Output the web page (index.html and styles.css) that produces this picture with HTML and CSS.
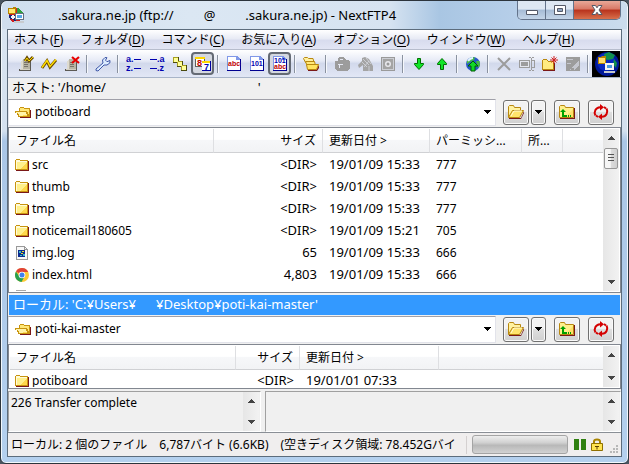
FILE: index.html
```html
<!DOCTYPE html>
<html lang="ja">
<head>
  <meta charset="UTF-8">
  <meta name="viewport" content="width=device-width, initial-scale=1.0">
  <title>NextFTP4</title>
  <link rel="stylesheet" href="styles.css">
</head>
<body>
  <!-- shared icons -->
  <svg class="defs" aria-hidden="true">
    <symbol id="folder" viewBox="0 0 14 14">
      <path d="M13 3h1v10H1v-1h12z" fill="#7a1818"/>
      <path d="M0 2h1V1h4v1h8v10H0z" fill="#c89410"/>
      <path d="M1 2h4v1h7v8H1z" fill="#fff08c"/>
      <path d="M5 11l7-7v7z" fill="#ffd84c"/>
      <path d="M1 2h4v1h7v1H2v7H1z" fill="#fffbd8"/>
    </symbol>
    <symbol id="folder-open" viewBox="0 0 16 13">
      <path d="M15 4h1v8H5v-1h10z" fill="#7a1818"/>
      <path d="M4 2h1V1h4v1h6v9H4z" fill="#c89410"/>
      <path d="M5 2h4v1h5v7H5z" fill="#ffe878"/>
      <path d="M0 5h12v1h1v2h1v3H3V9H2V7H0z" fill="#c89410"/>
      <path d="M1 6h10v2h1v2H4V8H3V7H1z" fill="#fff4a8"/>
      <path d="M8 9h4v1H7z" fill="#ffdc58"/>
    </symbol>
    <symbol id="folder-tool" viewBox="0 0 18 16">
      <path d="M2 14h12l3-7v2l-3 6H2z" fill="#7a1818"/>
      <path d="M1.500 13.500v-11l1-1h4l1 2h6v3" fill="#fff2a0" stroke="#b88810"/>
      <path d="M1.500 13.500l4-7h11l-4 7z" fill="#ffe46c" stroke="#b88810"/>
      <path d="M4 12l3-5h8" fill="none" stroke="#fffbd8"/>
    </symbol>
    <symbol id="folder-up" viewBox="0 0 18 16">
      <path d="M2 14h14V4h1v11H2z" fill="#7a1818"/>
      <path d="M1.500 13.500v-11l1-1h4l1 2h8v10z" fill="#fff08a" stroke="#b88810"/>
      <path d="M8 13l7-8v8z" fill="#ffdf68"/>
      <path d="M5 5l3 3H6v3h3v2H4V8H2z" fill="#00a000"/>
      <path d="M10 11h1v2h-1zM12 11h1v2h-1z" fill="#00a000"/>
    </symbol>
    <symbol id="reload" viewBox="0 0 16 16">
      <path d="M2.500 11.500A5.500 5.500 0 0 1 7 3.200M13.500 4.500A5.500 5.500 0 0 1 9 12.800" fill="none" stroke="#d40000" stroke-width="2"/>
      <path d="M7 0l4 3.200-4 3.300zM9 9.500l-4 3.300L9 16z" fill="#d40000"/>
      <path d="M11 3l2 1.500M5 13l-2-1.500" stroke="#d40000" stroke-width="2"/>
    </symbol>
    <symbol id="drop" viewBox="0 0 7 4"><path d="M0 0h7L3.500 4z" fill="#000"/></symbol>
    <symbol id="up" viewBox="0 0 7 4"><path d="M0 4h7L3.500 0z" fill="#444"/></symbol>
    <symbol id="page" viewBox="0 0 14 15">
      <path d="M0 0h10l4 4v11H0z" fill="#000090"/>
      <path d="M0 0h10l3 3v11H0z" fill="#8098e8"/>
      <path d="M1 1h8v3h4v10H1z" fill="#fff"/>
    </symbol>
    <symbol id="arrow" viewBox="0 0 12 14">
      <path d="M4.500 1.500h3v5h3v1L6 12.500 1.500 7.500v-1h3z" fill="#10e428" stroke="#007000"/>
    </symbol>
    <symbol id="server" viewBox="0 0 16 16">
      <path d="M3 5l2-2h7v10H3z" fill="#b8b4a4"/>
      <path d="M3 5l2-2v10H3z" fill="#dedbd0"/>
      <path d="M6 6h4v1H6zM6 8h4v1H6zM6 10h4v1H6z" fill="#77736a"/>
      <path d="M12 4h1v9h-1zM1 13h12v2H1z" fill="#5c5a54"/>
      <path d="M2 13h10v1H2z" fill="#d4d0c4"/>
    </symbol>
  </svg>

  <div class="window">
    <header class="titlebar">
      <svg class="app-icon" viewBox="0 0 16 16">
        <circle cx="8" cy="8" r="7" fill="#d42020"/>
        <path d="M1 8a7 7 0 0 0 7 7V8z" fill="#182878"/>
        <path d="M9 1a7 7 0 0 1 6 7H9z" fill="#30a040"/>
        <path d="M2 10l3-2 2 2-2 3z" fill="#f4f4f4"/>
        <path d="M1 12h4l2 3H5z" fill="#d42020"/>
        <path d="M0 1h4l1-1h3v7H0z" fill="#b88400"/>
        <path d="M1 2h6v4H1z" fill="#ffe870"/>
        <path d="M7.500 6.500h8v6h-8z" fill="#fff" stroke="#667080"/>
        <path d="M9 8h5v3H9z" fill="#58a8e8"/>
        <path d="M6 14h10v2H6z" fill="#c8ccd0"/>
      </svg>
      <h1><span>.sakura.ne.jp (ftp://</span><span class="at">@</span><span>.sakura.ne.jp) - NextFTP4</span></h1>
      <div class="win-buttons">
        <button class="min" aria-label="最小化"><svg viewBox="0 0 14 12"><path d="M1.500 6.500h11v4h-11z" fill="#fff" stroke="#555a68"/></svg></button>
        <button class="max" aria-label="最大化"><svg viewBox="0 0 14 12"><path d="M1.500 1.500h11v9h-11z" fill="#fff" stroke="#555a68"/><path d="M4.500 4.500h5v3h-5z" fill="#93a8c4" stroke="#555a68"/></svg></button>
        <button class="close" aria-label="閉じる"><svg viewBox="0 0 14 12"><path d="M2 1.500h3.500L7 3.800l1.500-2.300H12L9 6l3 4.500H8.500L7 8.200l-1.500 2.300H2L5 6z" fill="#fff" stroke="#555a68"/></svg></button>
      </div>
    </header>

    <main class="client">
      <nav class="menu">
        <button>ホスト(<u>F</u>)</button>
        <button>フォルダ(<u>D</u>)</button>
        <button>コマンド(<u>C</u>)</button>
        <button>お気に入り(<u>A</u>)</button>
        <button>オプション(<u>O</u>)</button>
        <button>ウィンドウ(<u>W</u>)</button>
        <button>ヘルプ(<u>H</u>)</button>
      </nav>

      <div class="toolbar">
        <button aria-label="接続"><svg viewBox="0 0 16 16"><use href="#server"/><path class="aa" d="M7 5l2-3 2 3 4-4" fill="none" stroke="#6a4a00" stroke-width="3"/><path class="aa" d="M7 5l2-3 2 3 4-4" fill="none" stroke="#ffe000"/></svg></button>
        <button aria-label="クイック接続"><svg class="aa" viewBox="0 0 16 16"><path d="M1 12l5-7 3 6 6-7" fill="none" stroke="#6a4a00" stroke-width="3"/><path d="M1 11.500l5-7 3 6 6-7" fill="none" stroke="#ffdc00" stroke-width="1.500"/></svg></button>
        <button aria-label="切断"><svg viewBox="0 0 16 16"><use href="#server"/><path class="aa" d="M8 1l7 6M15 1L8 7" stroke="#e80000" stroke-width="2.200"/></svg></button>
        <i></i>
        <button aria-label="設定"><svg class="aa" viewBox="0 0 16 16"><path d="M1 13l7-6-.5-3L10 1.500l2 .2-1.500 2.500 1.500 1.500L15 4.500l-.2 2.500L12 9l-3 0-6 6-2-.5z" fill="#dcecff" stroke="#4058a8"/></svg></button>
        <i></i>
        <button aria-label="昇順"><svg viewBox="0 0 16 16"><text x="0" y="6">a.</text><text x="0" y="15">z.</text><path d="M8 3h7v1H8zM8 12h7v1H8z" fill="#0000b0"/></svg></button>
        <button aria-label="降順"><svg viewBox="0 0 16 16"><text x="8" y="6">.a</text><text x="8" y="15">.z</text><path d="M1 3h7v1H1zM1 12h7v1H1z" fill="#0000b0"/></svg></button>
        <button aria-label="種類順"><svg viewBox="0 0 16 16"><path d="M1 1h6v6H1zM5 5h6v6H5zM9 9h6v6H9z" fill="#4a4a10"/><path d="M1 1h5v5H1zM5 5h5v5H5zM9 9h5v5H9z" fill="#a8a020"/><path d="M2 2h4v4H2zM6 6h4v4H6zM10 10h4v4h-4z" fill="#ffff98"/></svg></button>
        <button class="pressed" aria-label="日付順"><svg viewBox="0 0 16 16"><path d="M0 1h10v10H0z" fill="#606060"/><path d="M1 2h8v8H1z" fill="#fff"/><path d="M0 1h10v2H0z" fill="#ffd800"/><text class="red" x="2" y="10">8</text><path d="M7 5h9v10H7z" fill="#0000a0"/><path d="M7 5h8v9H7z" fill="#fff"/><path d="M7 5h8v2H7z" fill="#ffd800"/><text x="9" y="14">7</text></svg></button>
        <i></i>
        <button aria-label="アスキー"><svg viewBox="0 0 16 16"><use href="#page" x="1" width="14" height="15"/><text class="red small" x="2" y="10">abc</text></svg></button>
        <button aria-label="バイナリ"><svg viewBox="0 0 16 16"><use href="#page" x="1" width="14" height="15"/><text class="small" x="2" y="10">101</text></svg></button>
        <button class="pressed" aria-label="自動"><svg viewBox="0 0 16 16"><use href="#page" x="1" width="14" height="15"/><text class="small" x="2" y="7">101</text><text class="red small" x="2" y="13">abc</text></svg></button>
        <i></i>
        <button aria-label="フォルダを開く"><svg class="aa" viewBox="0 0 16 16"><path d="M5 13.500h8.500L16 9v3l-2 3H5z" fill="#7a1818"/><path d="M.5 2.500l1-1h3l1 1h4.500l1 4H2.500z" fill="#fff0a0" stroke="#b88810"/><path d="M2.500 5.500h9l1 4H4z" fill="#ffe878" stroke="#b88810"/><path d="M3.500 8.500h12l-2 5h-9z" fill="#ffe460" stroke="#b88810"/></svg></button>
        <i></i>
        <button disabled aria-label="アップロード"><svg viewBox="0 0 16 16"><path d="M1 5h3V2l2-1h4l2 3h2l2 2v6l-3 3H3l-2-2z" fill="#9c9c9c"/><path d="M6 3h3v1H6zM4 8h5v1H6v3H5V9H4z" fill="#e4e7f2"/></svg></button>
        <button disabled aria-label="検索"><svg class="aa" viewBox="0 0 16 16"><path d="M5 2l3-1 4 2 4 7v5H6V9l-4 3-1-3 4-4z" fill="#a4a4a4"/><path d="M6 3l6 6M9 2l5 6M5 6l5 5M7 11l5-6M12 10v5" stroke="#dcdfe8" stroke-width=".7"/></svg></button>
        <button disabled aria-label="表示"><svg viewBox="0 0 16 16"><path d="M1.500 1.500h13v13h-13z" fill="#ccced4" stroke="#9a9a9a"/><path d="M3 3h10v10H3z" fill="#a4a4a4"/><circle class="aa" cx="8" cy="8" r="3" fill="#e8e8ec"/><circle class="aa" cx="8" cy="8" r="1.500" fill="#999"/></svg></button>
        <i></i>
        <button aria-label="ダウンロード"><svg class="aa" viewBox="0 0 16 16"><use href="#arrow" x="2" y="1" width="12" height="14"/></svg></button>
        <button aria-label="送信"><svg class="aa" viewBox="0 0 16 16"><use href="#arrow" x="2" y="1" width="12" height="14" transform="rotate(180 8 8)"/></svg></button>
        <i></i>
        <button aria-label="ミラー"><svg class="aa" viewBox="0 0 16 16"><circle cx="8" cy="8" r="7" fill="#2858c8"/><path d="M2 5q4-5 8-3.500L9 4 5 6 2 8zM11 5l3.500 0 .5 4-2 3z" fill="#48b848"/><path d="M3 5q2-3 5-3" stroke="#e4f4ff" stroke-width="2" fill="none"/><path d="M8 5l5 5h-3v5H6v-5H3z" fill="#10d828" stroke="#006000"/></svg></button>
        <i></i>
        <button disabled aria-label="削除"><svg class="aa" viewBox="0 0 16 16"><path d="M2 2l12 12M14 2L2 14" stroke="#9c9c9c" stroke-width="2"/></svg></button>
        <button disabled aria-label="名前の変更"><svg viewBox="0 0 16 16"><path d="M.5 4.500h10v7H.5z" fill="#e4e6ee" stroke="#9c9c9c"/><path d="M2 6h7v4H2z" fill="#9c9c9c"/><path d="M10 1h2v1h-2zM13 1h2v1h-2zM12 2h1v12h-1zM10 14h2v1h-2zM13 14h2v1h-2zM13 4h3v8h-3v-1h2V5h-2z" fill="#9c9c9c"/></svg></button>
        <button aria-label="フォルダ作成"><svg viewBox="0 0 16 16"><path d="M1 14h11V7h1v8H1z" fill="#7a1818"/><path d="M0 4l1-1h4l1 2h6v9H0z" fill="#b88810"/><path d="M1 4h4l1 2h5v7H1z" fill="#ffec80"/><path class="aa" d="M12 0v8M8 4h8M9.500 1.500l5 5M14.500 1.500l-5 5" stroke="#d02020"/></svg></button>
        <button disabled aria-label="属性"><svg viewBox="0 0 16 16"><path d="M1 1h14v14H1z" fill="#9c9c9c"/><path d="M2 3h6v1H2zM2 7h4v1H2zM4 14l10-9v4l-4 5z" fill="#c4c6ce"/><path d="M6 12h3v2H6z" fill="#9c9c9c"/></svg></button>
        <i></i>
        <svg class="globe" viewBox="0 0 28 26">
          <path d="M0 0h28v26H0z" fill="#000"/>
          <circle cx="15" cy="13" r="12" fill="#001898"/>
          <circle cx="14" cy="11" r="9" fill="#0828c0"/>
          <path d="M12 3l5-2 6 3-2 4-5 1-3-1zM22 8l3 4-1 5-3-4z" fill="#10904c"/>
          <path d="M6 6h3l1-1h4v8H6z" fill="#b88400"/>
          <path d="M7 7h6v5H7z" fill="#ffe070"/>
          <path d="M13 12h9v7h-9z" fill="#f4f4f4"/>
          <path d="M15 14h5v3h-5z" fill="#4898e0"/>
          <path d="M12 20h11v2H12z" fill="#c4c8cc"/>
        </svg>
      </div>

      <div class="pathline host">ホスト: '/home/<span class="blank"></span>'</div>
      <div class="location">
        <label class="combo">
          <svg><use href="#folder-open"/></svg>
          <select aria-label="ホストのフォルダ"><option>potiboard</option></select>
          <svg class="drop"><use href="#drop"/></svg>
        </label>
        <button class="tool" aria-label="開く"><svg class="aa"><use href="#folder-tool"/></svg></button><button class="tool split" aria-label="履歴"><svg class="drop"><use href="#drop"/></svg></button>
        <button class="tool" aria-label="上へ"><svg class="aa"><use href="#folder-up"/></svg></button>
        <button class="tool" aria-label="更新"><svg class="aa"><use href="#reload"/></svg></button>
      </div>

      <section class="list remote">
        <div class="rows">
          <table>
            <colgroup><col class="w-name"><col class="w-size"><col class="w-date"><col class="w-perm"><col class="w-owner"><col></colgroup>
            <thead>
              <tr><th>ファイル名</th><th class="num">サイズ</th><th>更新日付 &gt;</th><th>パーミッシ...</th><th>所...</th><th></th></tr>
            </thead>
            <tbody>
              <tr><td><svg><use href="#folder"/></svg>src</td><td class="num">&lt;DIR&gt;</td><td class="date">19/01/09 15:33</td><td>777</td><td></td><td></td></tr>
              <tr><td><svg><use href="#folder"/></svg>thumb</td><td class="num">&lt;DIR&gt;</td><td class="date">19/01/09 15:33</td><td>777</td><td></td><td></td></tr>
              <tr><td><svg><use href="#folder"/></svg>tmp</td><td class="num">&lt;DIR&gt;</td><td class="date">19/01/09 15:33</td><td>777</td><td></td><td></td></tr>
              <tr><td><svg><use href="#folder"/></svg>noticemail180605</td><td class="num">&lt;DIR&gt;</td><td class="date">19/01/09 15:21</td><td>705</td><td></td><td></td></tr>
              <tr><td><svg viewBox="0 0 14 14"><path d="M1.500 .5h8l3 3v10h-11z" fill="#f8f8f8" stroke="#999"/><path d="M9.500 .5v3h3" fill="none" stroke="#999"/><path d="M3 4h7v7H3z" fill="#0c2c90"/><path d="M4 5h2v2H4zM8 8h2v2H8zM5 9h2v1H5z" fill="#38b8c8"/><path d="M7 5h2v1H7zM6 7h2v1H6z" fill="#f0e020"/></svg>img.log</td><td class="num">65</td><td class="date">19/01/09 15:33</td><td>666</td><td></td><td></td></tr>
              <tr><td><svg class="aa" viewBox="0 0 14 14"><circle cx="7" cy="7" r="7" fill="#fcc934"/><path d="M7 7L1 3.400A7 7 0 0 1 13.200 4H7z" fill="#e04438"/><path d="M1 3.400A7 7 0 0 0 6.500 14L9.500 8.500 7 7 4.300 8.500z" fill="#28a050"/><circle cx="7" cy="7" r="3.300" fill="#fff"/><circle cx="7" cy="7" r="2.500" fill="#3f80ee"/></svg>index.html</td><td class="num">4,803</td><td class="date">19/01/09 15:33</td><td>666</td><td></td><td></td></tr>
              <tr><td><svg viewBox="0 0 14 14"><path d="M1.500 .5h9l2 3v10h-11z" fill="#f6f6f6" stroke="#aaa"/></svg></td><td></td><td></td><td></td><td></td><td></td></tr>
            </tbody>
          </table>
        </div>
        <div class="scroll"><svg><use href="#up"/></svg><span class="thumb"></span><svg class="down"><use href="#drop"/></svg></div>
      </section>

      <div class="pathline local">ローカル: 'C:¥Users¥<span class="blank"></span>¥Desktop¥poti-kai-master'</div>
      <div class="location">
        <label class="combo">
          <svg><use href="#folder-open"/></svg>
          <select aria-label="ローカルのフォルダ"><option>poti-kai-master</option></select>
          <svg class="drop"><use href="#drop"/></svg>
        </label>
        <button class="tool" aria-label="開く"><svg class="aa"><use href="#folder-tool"/></svg></button><button class="tool split" aria-label="履歴"><svg class="drop"><use href="#drop"/></svg></button>
        <button class="tool" aria-label="上へ"><svg class="aa"><use href="#folder-up"/></svg></button>
        <button class="tool" aria-label="更新"><svg class="aa"><use href="#reload"/></svg></button>
      </div>

      <section class="list local-list">
        <div class="rows">
          <table>
            <colgroup><col class="w-name"><col class="w-size"><col class="w-date"><col></colgroup>
            <thead>
              <tr><th>ファイル名</th><th class="num">サイズ</th><th>更新日付 &gt;</th><th></th></tr>
            </thead>
            <tbody>
              <tr><td><svg><use href="#folder"/></svg>potiboard</td><td class="num">&lt;DIR&gt;</td><td class="date">19/01/01 07:33</td><td></td></tr>
            </tbody>
          </table>
        </div>
        <div class="scroll"><svg><use href="#up"/></svg><svg class="down"><use href="#drop"/></svg></div>
      </section>

      <section class="logs">
        <div class="log first">
          <textarea readonly aria-label="ログ">226 Transfer complete</textarea>
          <div class="scroll"><svg><use href="#up"/></svg><svg class="down"><use href="#drop"/></svg></div>
        </div>
        <div class="log">
          <textarea readonly aria-label="転送ログ"></textarea>
          <div class="scroll"><svg><use href="#up"/></svg><svg class="down"><use href="#drop"/></svg></div>
        </div>
      </section>

      <footer class="status">
        <p><span>ローカル: 2 個のファイル</span><span>6,787バイト (6.6KB)</span><span>(空きディスク領域: 78.452Gバイ</span></p>
        <progress value="0" max="100" aria-label="転送の進行状況"></progress>
        <svg class="bars" viewBox="0 0 12 11"><path d="M0 0h5v11H0zM7 0h5v11H7z" fill="#2f8010"/></svg>
        <svg class="lock aa" viewBox="0 0 12 13"><path d="M3 6V3.500q0-2 3-2t3 2V6" fill="none" stroke="#a88400" stroke-width="2"/><path d="M.5 5.500h11v7H.5z" fill="#ffe450" stroke="#907000"/><path d="M4 8.500h4M6 8.500v3" stroke="#5a3c00"/></svg>
        <svg class="grip" viewBox="0 0 9 9"><path d="M6 0h2v2H6zM3 3h2v2H3zM6 3h2v2H6zM0 6h2v2H0zM3 6h2v2H3zM6 6h2v2H6z" fill="#b8b8b8"/></svg>
      </footer>
    </main>
  </div>
</body>
</html>
```
FILE: styles.css
```css
* { box-sizing: border-box; }
html, body { height: 100%; margin: 0; overflow: hidden; }
body {
  background: #4a5560; color: #000;
  font: 12px/18px "Noto Sans", "Noto Sans CJK JP", sans-serif;
}
button, select, textarea { font: inherit; color: inherit; margin: 0; padding: 0; border: none; background: none; }
svg { flex: none; display: block; overflow: visible; shape-rendering: crispEdges; }
.defs { position: absolute; width: 0; height: 0; }
.aa, .win-buttons svg { shape-rendering: auto; }

/* ウィンドウ枠 */
.window {
  height: 100vh; display: flex; flex-direction: column; padding: 0 7px 7px;
  border: 1px solid #2c343c; border-radius: 7px 7px 6px 6px;
  background: linear-gradient(#dbe6f2 0, #d3e0ee 130px, #aac6e6 140px, #b4d0ee 100%);
  box-shadow: inset 0 0 0 1px #f2f8fc;
}
.titlebar {
  flex: none; height: 28px; display: flex; align-items: center;
  margin: 0 -6px; padding-left: 6px; border-radius: 6px 6px 0 0;
  background: linear-gradient(90deg, #cfdeee 0, #dbe7f3 30%, #d6e3f1 62%, #a9c6e3 70%, #b4cde8 80%, #cbdced 100%);
}
.app-icon { width: 16px; height: 16px; }
h1 { flex: 1; margin: 0 0 0 34px; font-size: 13px; font-weight: 400; line-height: 18px; white-space: nowrap; overflow: hidden; }
.at { margin: 0 30px; }
.win-buttons {
  align-self: flex-start; display: flex; margin-right: 6px;
  border: 1px solid #63738a; border-top: none; border-radius: 0 0 5px 5px; overflow: hidden;
}
.win-buttons button {
  width: 28px; height: 18px; display: flex; align-items: center; justify-content: center;
  background: linear-gradient(#dde7f2 45%, #a6bcd6 50%, #c4d5e8); border-right: 1px solid #63738a;
}
.win-buttons .close { width: 46px; border: none; background: linear-gradient(#e8a898 0, #d87866 45%, #b8321c 50%, #d8704c); }
.win-buttons svg { width: 14px; height: 12px; }

.client {
  flex: 1; min-height: 0; display: flex; flex-direction: column;
  background: #f0f0f0; border: 1px solid #5c6c7c; margin: 0 -1px -1px;
}
.client > * { flex: none; }

/* メニューとツールバー */
.menu {
  display: flex; gap: 17px; height: 20px; padding: 0 6px; align-items: center;
  background: linear-gradient(#fff, #e8ebf5 45%, #d8dcee 55%, #e2e5f4);
  border-bottom: 1px solid #b6bccc;
}
.menu button { white-space: nowrap; }
.menu u { text-underline-offset: 2px; }
.toolbar {
  display: flex; align-items: center; height: 28px; padding: 0 2px 0 6px;
  background: linear-gradient(#fff, #e6eaf6 40%, #d2d9ec 50%, #e2e7f5);
  border-bottom: 1px solid #a8b4c8;
}
.toolbar button { width: 23px; height: 23px; flex: none; display: flex; align-items: center; justify-content: center; }
.toolbar button svg { width: 16px; height: 16px; }
.toolbar i { flex: none; width: 2px; height: 18px; margin: 0 3px; border-left: 1px solid #8a92a0; border-right: 1px solid #f6f8fc; }
.toolbar text { font: 700 9px "Liberation Sans", sans-serif; fill: #0000b0; }
.toolbar .small { font-size: 7px; }
.toolbar .red { fill: #c00000; }
.toolbar .pressed { border: 2px solid #646a74; border-radius: 4px; background: #d4d8e0; }
.globe { width: 28px; height: 26px; shape-rendering: auto; }

.pathline { height: 20px; padding: 0 4px; font-size: 13px; line-height: 19px; white-space: nowrap; overflow: hidden; }
.blank { display: inline-block; width: 20px; }
.host .blank { width: 152px; }
.local { background: #3399ff; color: #fff; margin: 2px 1px 0; }

/* フォルダ選択 */
.location { display: flex; align-items: center; height: 28px; padding-right: 7px; }
.combo {
  flex: 1; min-width: 0; display: flex; align-items: center; height: 27px; position: relative;
  padding-left: 6px; background: #fff; border: 1px solid #e2e3ea; border-top-color: #a0a0a8; margin-right: 7px;
}
.combo > svg:first-child { width: 16px; height: 13px; }
.combo select { flex: 1; appearance: none; height: 24px; padding-left: 4px; outline: none; }
.drop { width: 7px; height: 4px; }
.combo .drop { position: absolute; right: 4px; pointer-events: none; }
.tool {
  width: 26px; height: 25px; display: flex; align-items: center; justify-content: center;
  border: 1px solid #707070; border-radius: 3px; box-shadow: inset 0 0 0 1px #fafafa;
  background: linear-gradient(#f2f2f2 45%, #dedede 50%, #d0d0d0);
}
.tool + .tool { margin-left: 8px; }
.tool + .tool.split { width: 15px; margin-left: 2px; }
.tool svg { width: 18px; height: 16px; }
.tool svg.drop { width: 7px; height: 4px; }

/* ファイル一覧 */
.list { display: flex; min-height: 0; padding: 1px; background: #fff; border: 1px solid #828790; }
.remote { flex: 1; margin-top: 1px; }
.local-list { height: 45px; margin-top: 1px; }
.rows { flex: 1; min-width: 0; overflow: hidden; }
table { width: 100%; table-layout: fixed; border-collapse: separate; border-spacing: 0; }
th {
  height: 24px; padding: 0 6px; text-align: left; font-weight: 400; white-space: nowrap; overflow: hidden;
  background: linear-gradient(#fff 45%, #f6f7f9 50%, #f2f3f5);
  border-right: 1px solid #dedfe2; border-bottom: 1px solid #d0d1d4;
}
th:last-child { border-right: none; }
td { height: 22px; padding: 0 6px; line-height: 17px; white-space: nowrap; }
td svg { display: inline-block; width: 14px; height: 14px; margin-right: 3px; vertical-align: -3px; }
td:first-child { padding-left: 5px; }
.local-list td { height: 20px; }
.num { text-align: right; }
td.num, td.date { font-size: 13px; }
.remote .w-name { width: 204px; }
.remote .w-size { width: 109px; }
.remote .w-date { width: 107px; }
.remote .w-perm { width: 92px; }
.remote .w-owner { width: 41px; }
.local-list .w-name { width: 226px; }
.local-list .w-size { width: 64px; }
.local-list .w-date { width: 139px; }

.scroll {
  flex: none; width: 16px; display: flex; flex-direction: column; align-items: center;
  padding: 7px 0; background: linear-gradient(90deg, #e6e6e6, #f2f2f2); gap: 8px;
}
.scroll svg { width: 7px; height: 4px; }
.scroll .down { margin-top: auto; opacity: .7; }
.thumb {
  width: 14px; height: 21px; border: 1px solid #979797; border-radius: 2px;
  background:
    repeating-linear-gradient(#555 0 1px, transparent 1px 3px) center/6px 9px no-repeat,
    linear-gradient(90deg, #f6f6f6 45%, #dcdcdc 50%, #d0d0d0);
}

/* ログ */
.logs { display: flex; gap: 4px; height: 41px; margin-top: 2px; }
.log { flex: 1; min-width: 0; display: flex; border: 1px solid #fff; border-top-color: #a0a0a0; border-left-color: #a0a0a0; padding-right: 1px; }
.log.first { flex: 0 0 253px; }
.log textarea { flex: 1; min-width: 0; resize: none; outline: none; padding: 2px; overflow: hidden; }

/* ステータスバー */
.status { display: flex; align-items: center; height: 24px; padding: 0 2px 0 3px; background: #f0eeee; border-top: 1px solid #8a8f96; }
.status p { flex: 1; display: flex; gap: 12px; margin: 0 5px 0 0; white-space: nowrap; overflow: hidden; border-right: 1px solid #d4d0d0; }
progress {
  appearance: none; width: 96px; height: 19px; border: 1px solid #a4a4a4; border-radius: 3px; overflow: hidden;
  background: linear-gradient(#eee, #d0d0d0 40%, #b8b8b8 55%, #d2d2d2);
}
progress::-webkit-progress-bar { background: none; }
.bars { width: 12px; height: 11px; margin: 0 5px 0 6px; }
.lock { width: 12px; height: 13px; }
.grip { width: 9px; height: 9px; margin: auto 0 2px 7px; }
```
